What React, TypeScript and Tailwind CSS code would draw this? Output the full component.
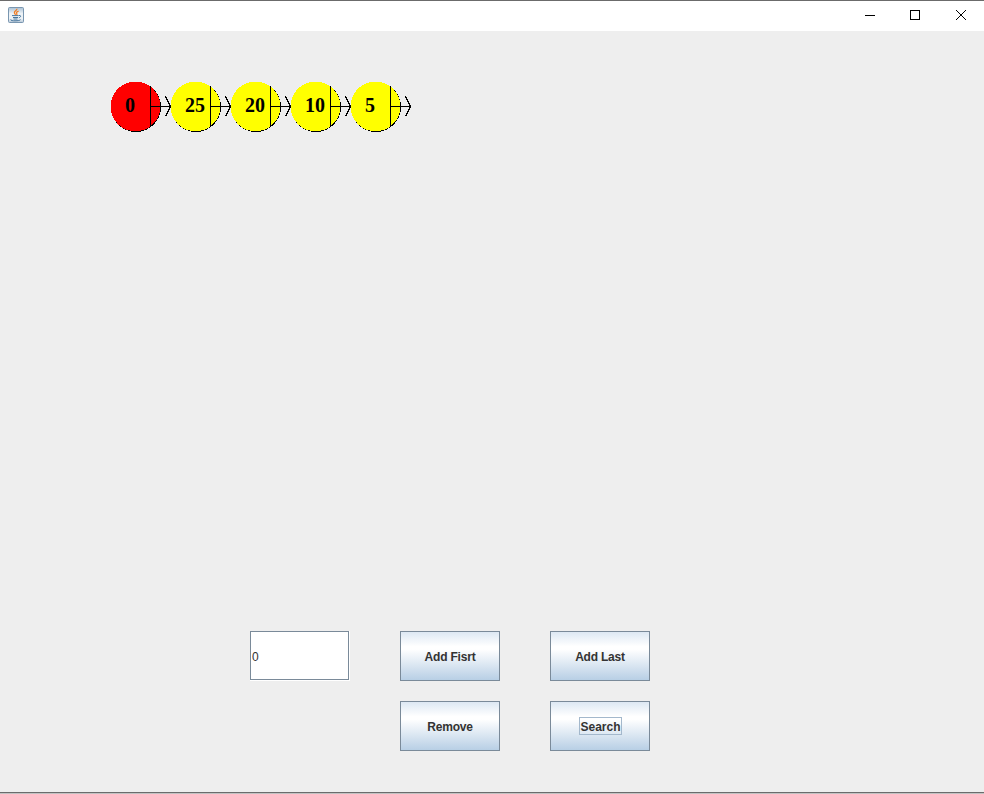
import type { ReactNode } from "react";

const nodes = [
  { value: "0", x: 110, tx: 125, fill: "#ff0000" },
  { value: "25", x: 170, tx: 185, fill: "#ffff00" },
  { value: "20", x: 230, tx: 245, fill: "#ffff00" },
  { value: "10", x: 290, tx: 305, fill: "#ffff00" },
  { value: "5", x: 350, tx: 365, fill: "#ffff00" },
];

function JavaIcon() {
  return (
    <svg width="16" height="16" viewBox="0 0 16 16" fill="none">
      <defs>
        <linearGradient id="tile" x1="0" y1="0" x2="0" y2="1">
          <stop offset="0" stopColor="#a9c0d4" />
          <stop offset="0.4" stopColor="#edf2f6" />
          <stop offset="0.75" stopColor="#edf2f6" />
          <stop offset="1" stopColor="#b4c5d5" />
        </linearGradient>
      </defs>
      <rect x="0.5" y="0.5" width="15" height="15" rx="1" fill="url(#tile)" stroke="#7996b0" />
      <path d="M8.8 1.8C9.5 3.4 6 4.2 6.4 5.8C6.6 6.6 7.5 7 7.3 8M10.6 4C8.6 5 8 5.6 8.7 6.4C9.2 7 9 7.5 8.5 8" stroke="#f07d24" strokeWidth="1.3" />
      <path d="M4 8.6H10.7M5 10.5H10M5.5 12H9.5M11 8.5C13.4 8 13 10.3 10.8 10.8M3 12.3C2 13.4 4 13.8 7 13.8C10 13.8 12 13.4 12.5 12.6" stroke="#47769d" strokeWidth="1" />
    </svg>
  );
}

function TitleBar() {
  return (
    <header className="flex h-[31px] shrink-0 items-start justify-between border-t border-[#6b6b6b] bg-white pl-2">
      <div className="pt-1.5">
        <JavaIcon />
      </div>
      <div className="flex">
        <svg width="46" height="30" shapeRendering="crispEdges">
          <path d="M18 14h10v1h-10z" fill="#000" />
        </svg>
        <svg width="46" height="30" shapeRendering="crispEdges">
          <rect x="17.5" y="9.5" width="9" height="9" fill="none" stroke="#000" />
        </svg>
        <svg width="45" height="30">
          <path d="M17 9l10 10M27 9l-10 10" fill="none" stroke="#000" strokeWidth="1" />
        </svg>
      </div>
    </header>
  );
}

function LinkedList() {
  return (
    <svg width="984" height="600" className="block" viewBox="0 31 984 600">
      {nodes.map((n) => (
        <g key={n.x}>
          <g shapeRendering="crispEdges">
            <circle cx={n.x + 25.9} cy="106.9" r="25.1" fill="#000" />
            <circle cx={n.x + 25.5} cy="106.4" r="24.9" fill={n.fill} />
            <path d={`M${n.x + 40} 86h1v41h-1zM${n.x + 40} 106h21v1h-21z`} fill="#000" />
            <path d={`M${n.x + 55.5} 96.5l5 10l-5 10`} fill="none" stroke="#000" />
          </g>
          <text x={n.tx} y="112" fontSize="20" fontWeight="700" fontFamily="'Liberation Serif', serif">
            {n.value}
          </text>
        </g>
      ))}
    </svg>
  );
}

function SwingButton({ children, focused = false }: { children: ReactNode; focused?: boolean }) {
  return (
    <button className="flex h-[50px] w-[100px] items-center justify-center border border-[#7a8a99] bg-[linear-gradient(to_bottom,#dde8f3_0%,#ffffff_30%,#ffffff_36%,#b8cfe5_100%)] text-xs font-bold text-[#333333]">
      <span
        className={
          focused
            ? "flex h-[18px] w-[43px] items-center justify-center border border-[#a3b8cc] pt-0.5 pl-px"
            : "pt-px tracking-[-0.2px]"
        }
      >
        {children}
      </span>
    </button>
  );
}

export default function App() {
  return (
    <div className="flex h-[794px] w-[984px] flex-col overflow-hidden bg-[#eeeeee] font-['Liberation_Sans',Arial,sans-serif]">
      <TitleBar />
      <main className="h-[761px] shrink-0">
        <LinkedList />
        <div className="ml-[250px] grid w-[400px] grid-cols-[100px_100px_100px] gap-x-[50px] gap-y-5">
          <div className="h-[50px] w-[100px] border-r border-b border-white">
            <input
              className="block h-[49px] w-[99px] border border-[#7a8a99] bg-white pt-0.5 pl-px text-xs text-[#333333] outline-none"
              defaultValue="0"
            />
          </div>
          <SwingButton>Add Fisrt</SwingButton>
          <SwingButton>Add Last</SwingButton>
          <div />
          <SwingButton>Remove</SwingButton>
          <SwingButton focused>Search</SwingButton>
        </div>
      </main>
      <div className="h-px shrink-0 bg-[#6b6b6b]" />
      <div className="h-px shrink-0 bg-[#c2c2c2]" />
    </div>
  );
}
